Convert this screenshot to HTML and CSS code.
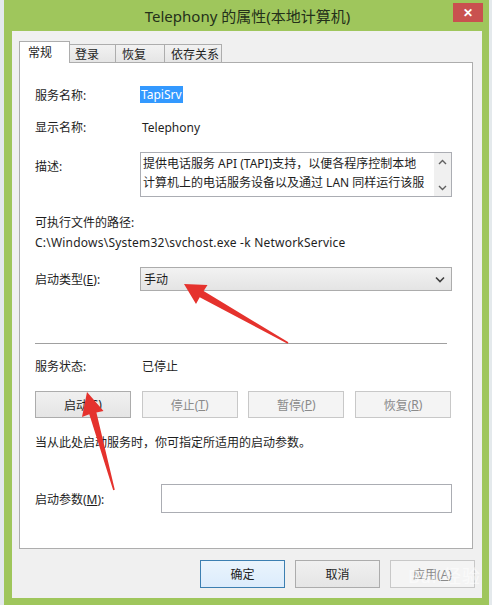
FILE: index.html
```html
<!DOCTYPE html>
<html lang="zh-CN">
<head>
<meta charset="utf-8">
<title>Telephony 的属性(本地计算机)</title>
<link rel="stylesheet" href="styles.css">
</head>
<body>
<div class="frame">
  <div class="titlebar">
    <div class="title">Telephony 的属性(本地计算机)</div>
    <div class="close">✕</div>
  </div>
  <div class="client">
    <div class="tabs">
      <div class="tab active">常规</div>
      <div class="tab">登录</div>
      <div class="tab">恢复</div>
      <div class="tab">依存关系</div>
    </div>
    <div class="tabpage">
      <div class="row r-name">
        <div class="label">服务名称:</div>
        <div class="value"><span class="sel">TapiSrv</span></div>
      </div>
      <div class="row r-display">
        <div class="label">显示名称:</div>
        <div class="value plain">Telephony</div>
      </div>
      <div class="row r-desc">
        <div class="label desc-label">描述:</div>
        <div class="textarea">
          <div class="ta-text">
            <div>提供电话服务 API (TAPI)支持，以便各程序控制本地</div>
            <div>计算机上的电话服务设备以及通过 LAN 同样运行该服</div>
          </div>
          <div class="ta-scroll">
            <svg width="9" height="6" viewBox="0 0 9 6"><path d="M1 5 L4.5 1.5 L8 5" fill="none" stroke="#606060" stroke-width="1.4"/></svg>
            <svg width="9" height="6" viewBox="0 0 9 6"><path d="M1 1 L4.5 4.5 L8 1" fill="none" stroke="#606060" stroke-width="1.4"/></svg>
          </div>
        </div>
      </div>
      <div class="line r-pathlabel">可执行文件的路径:</div>
      <div class="line r-path">C:\Windows\System32\svchost.exe -k NetworkService</div>
      <div class="row r-type">
        <div class="label">启动类型(<u>E</u>):</div>
        <div class="combo">
          <span>手动</span>
          <svg width="10" height="7" viewBox="0 0 10 7"><path d="M1 1.5 L5 5.5 L9 1.5" fill="none" stroke="#404040" stroke-width="1.6"/></svg>
        </div>
      </div>
      <div class="sep"></div>
      <div class="row r-status">
        <div class="label">服务状态:</div>
        <div class="value plain">已停止</div>
      </div>
      <div class="btnrow">
        <div class="btn">启动(<u>S</u>)</div>
        <div class="btn disabled">停止(<u>T</u>)</div>
        <div class="btn disabled">暂停(<u>P</u>)</div>
        <div class="btn disabled">恢复(<u>R</u>)</div>
      </div>
      <div class="line r-hint">当从此处启动服务时，你可指定所适用的启动参数。</div>
      <div class="row r-param">
        <div class="label wide">启动参数(<u>M</u>):</div>
        <div class="input"></div>
      </div>
    </div>
    <div class="footer">
      <div class="btn fbtn default">确定</div>
      <div class="btn fbtn">取消</div>
      <div class="btn fbtn disabled">应用(<u>A</u>)</div>
    </div>
  </div>
</div>
<div class="watermark">Bai 经验</div>
<svg class="arrows" width="492" height="605" viewBox="0 0 492 605">
  <polygon points="184,284 207.5,285 203.6,290.9 288.4,342.3 287.6,343.7 199.7,297.2 196,304" fill="#e5322d"/>
  <polygon points="87,392 103.5,411 96.4,412.6 114.8,489.8 113.2,490.2 89.3,414.3 82,417" fill="#e5322d"/>
</svg>
</body>
</html>
```
FILE: styles.css
```css
* { box-sizing: border-box; }
html, body { margin: 0; padding: 0; }
body {
  width: 492px;
  height: 605px;
  overflow: hidden;
  position: relative;
  background: #e4e9ec;
  font-family: "Noto Sans", "Noto Sans CJK SC", sans-serif;
  font-size: 12px;
  color: #1e1e1e;
}
.frame {
  margin-left: 4px;
  width: 485px;
  height: 605px;
  background: #9fc65c;
  display: flex;
  flex-direction: column;
}
.titlebar {
  height: 31px;
  position: relative;
  display: flex;
  justify-content: center;
  align-items: center;
}
.title {
  font-size: 15px;
  color: #24301a;
  margin-left: 2px;
  margin-top: -1px;
}
.close {
  position: absolute;
  right: 6px;
  top: 3px;
  width: 30px;
  height: 19px;
  background: #c9514f;
  color: #fff;
  font-size: 12px;
  font-weight: bold;
  display: flex;
  align-items: center;
  justify-content: center;
  line-height: 1;
}
.client {
  margin: 0 7px 7px 8px;
  flex: 1;
  background: #f0f0f0;
  padding: 10px 7px 0 7px;
  display: flex;
  flex-direction: column;
}
.tabs {
  display: flex;
  align-items: flex-end;
  height: 21px;
  position: relative;
  z-index: 1;
}
.tab {
  height: 18px;
  border: 1px solid #adadad;
  border-bottom: none;
  background: linear-gradient(#f2f2f2, #e5e5e5);
  display: flex;
  align-items: center;
  justify-content: flex-start;
  padding-left: 5px;
  font-size: 12px;
  margin-left: -1px;
}
.tab:nth-child(2) { width: 47px; }
.tab:nth-child(3) { width: 50px; padding-left: 6px; }
.tab:nth-child(4) { width: 58px; padding-left: 6px; }
.tab.active {
  width: 51px;
  height: 22px;
  margin-left: 0;
  margin-bottom: -1px;
  background: #fff;
  padding-left: 8px;
  padding-bottom: 2px;
  border-right: 1px solid #adadad;
}
.tabpage {
  width: 454px;
  height: 487px;
  background: #fff;
  border: 1px solid #adadad;
  padding: 23px 20px 0 15px;
  display: flex;
  flex-direction: column;
}
.row {
  display: flex;
  align-items: center;
}
.label {
  width: 105px;
  flex: none;
  white-space: nowrap;
}
.label.wide { width: 126px; }
.value.plain { padding-left: 2px; }
.sel {
  background: #3399ff;
  color: #fff;
  padding: 0 1px;
  display: inline-block;
  height: 17px;
  line-height: 17px;
}
.r-name { height: 17px; }
.r-display { height: 16px; margin-top: 16px; }
.r-desc { margin-top: 17px; align-items: flex-start; }
.desc-label { padding-top: 5px; }
.textarea {
  width: 312px;
  height: 45px;
  border: 1px solid #abadb3;
  display: flex;
  background: #fff;
}
.ta-text {
  flex: 1;
  padding: 1px 0 0 2px;
  line-height: 19px;
  white-space: nowrap;
  overflow: hidden;
}
.ta-scroll {
  width: 17px;
  flex: none;
  background: #f0f0f0;
  display: flex;
  flex-direction: column;
  justify-content: space-between;
  align-items: center;
  padding: 6px 0 5px;
}
.line { height: 16px; line-height: 16px; white-space: nowrap; }
.r-pathlabel { margin-top: 18px; }
.r-path { margin-top: 4px; letter-spacing: 0.22px; }
.r-type { margin-top: 16px; }
.combo {
  width: 312px;
  height: 24px;
  border: 1px solid #acacac;
  background: linear-gradient(#f2f2f2, #e4e4e4);
  display: flex;
  align-items: center;
  justify-content: space-between;
  padding: 0 6px 0 3px;
}
.sep {
  margin-top: 52px;
  height: 1px;
  width: 412px;
  background: #a0a0a0;
}
.r-status { height: 16px; margin-top: 14px; }
.btnrow {
  margin-top: 17px;
  width: 416px;
  display: flex;
  justify-content: space-between;
}
.btn {
  width: 96px;
  height: 27px;
  border: 1px solid #acacac;
  background: linear-gradient(#f0f0f0, #e5e5e5);
  display: flex;
  align-items: center;
  justify-content: center;
  white-space: nowrap;
}
.btn.disabled {
  color: #8a8a8a;
  border-color: #c8c8c8;
  background: #f4f4f4;
}
.r-hint { margin-top: 17px; }
.r-param { margin-top: 33px; }
.input {
  width: 291px;
  height: 29px;
  border: 1px solid #abadb3;
  background: #fff;
}
.footer {
  margin-top: 11px;
  display: flex;
  justify-content: flex-end;
  gap: 10px;
}
.fbtn { width: 85px; height: 28px; }
.fbtn.default {
  border-color: #3c7fb1;
  background: linear-gradient(#eaf4fc, #dcecfc);
}
.watermark {
  position: absolute;
  left: 408px;
  top: 562px;
  font-size: 18px;
  color: rgba(255, 255, 255, 0.55);
  letter-spacing: 1px;
  pointer-events: none;
}
.arrows {
  position: absolute;
  left: 0;
  top: 0;
  pointer-events: none;
}
```
